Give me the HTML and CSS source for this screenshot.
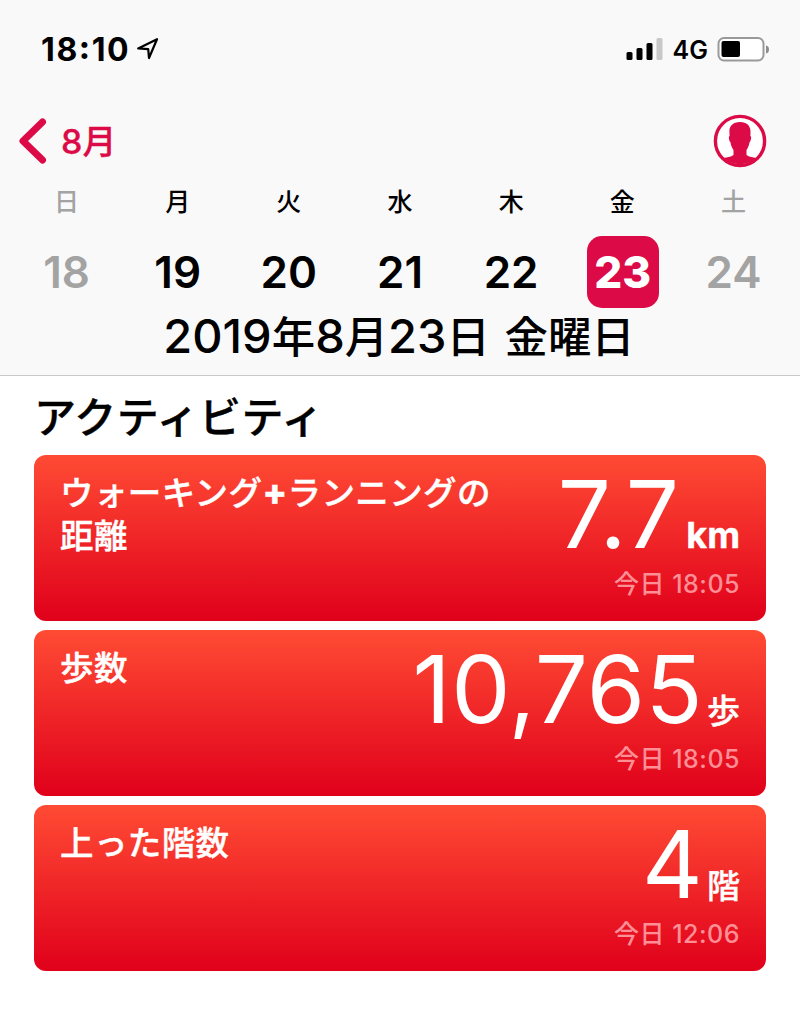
FILE: index.html
```
<!DOCTYPE html>
<html lang="ja">
<head>
    <meta charset="utf-8">
    <title>アクティビティ</title>
    <link rel="stylesheet" href="styles.css">
</head>
<body>
    <header class="header">
        <div class="status">
            <span class="time">18<span class="colon">:</span>10</span>
            <svg class="location" width="22" height="22" viewBox="0 0 22 22">
                <path d="M1.2 10.4 L20 1.2 L12 20 L11.2 11.2 Z" fill="none" stroke="#000" stroke-width="2.2" stroke-linejoin="round"/>
            </svg>
            <div class="status-right">
                <svg width="37" height="24" viewBox="0 0 37 24">
                    <rect x="0.5" y="15" width="6" height="8" rx="1.5"/>
                    <rect x="10.5" y="11" width="6" height="12" rx="1.5"/>
                    <rect x="20.5" y="6" width="6" height="17" rx="1.5"/>
                    <rect x="30.5" y="1" width="6" height="22" rx="1.5" fill="#c8c8c8"/>
                </svg>
                <span class="network">4G</span>
                <svg width="53" height="26" viewBox="0 0 53 26">
                    <rect x="1.5" y="2" width="45" height="22.5" rx="5.5" fill="#fff" stroke="#999" stroke-width="2"/>
                    <rect x="4.5" y="5" width="18.5" height="16" rx="2"/>
                    <path d="M49 9.5 Q52 10 52 13.5 Q52 17 49 17.5 Z" fill="#8c8c8c"/>
                </svg>
            </div>
        </div>
        <div class="nav">
            <a class="back">
                <svg width="28" height="46" viewBox="0 0 28 46">
                    <path d="M23.5 4 L4 23 L23.5 42" fill="none" stroke="#dc0a46" stroke-width="7" stroke-linecap="round" stroke-linejoin="round"/>
                </svg>
                <span>8月</span>
            </a>
            <svg class="profile" width="54" height="54" viewBox="0 0 54 54">
                <circle cx="27" cy="27" r="24.6" fill="#fff" stroke="#dc0a46" stroke-width="3.4"/>
                <path d="M27 8 C34 8 38 12 37.5 19 L37.4 22 C38.8 22.5 38 27 36.5 28.5 C36 32 34.5 34.5 33.5 36 L33.5 41 C36 43 40 43 43.5 44 A25 25 0 0 1 10.5 44 C14 43 18 43 20.5 41 L20.5 36 C19.5 34.5 18 32 17.5 28.5 C16 27 15.2 22.5 16.6 22 L16.4 17 C16.4 12 20 8 27 8 Z" fill="#dc0a46"/>
            </svg>
        </div>
        <div class="week">
            <div class="day off"><span class="name">日</span><span class="num">18</span></div>
            <div class="day"><span class="name">月</span><span class="num">19</span></div>
            <div class="day"><span class="name">火</span><span class="num">20</span></div>
            <div class="day"><span class="name">水</span><span class="num">21</span></div>
            <div class="day"><span class="name">木</span><span class="num">22</span></div>
            <div class="day selected"><span class="name">金</span><span class="num">23</span></div>
            <div class="day off"><span class="name">土</span><span class="num">24</span></div>
        </div>
        <div class="date"><b>2019</b>年<b>8</b>月<b>23</b>日 金曜日</div>
    </header>

    <main class="content">
        <h1>アクティビティ</h1>
        <div class="card">
            <div class="label">ウォーキング<span class="plus">+</span>ランニングの<br>距離</div>
            <div class="data">
                <div class="value">7.7<span class="unit latin">km</span></div>
                <div class="updated">今日 18:05</div>
            </div>
        </div>
        <div class="card">
            <div class="label">歩数</div>
            <div class="data">
                <div class="value">10,765<span class="unit">歩</span></div>
                <div class="updated">今日 18:05</div>
            </div>
        </div>
        <div class="card">
            <div class="label">上った階数</div>
            <div class="data">
                <div class="value">4<span class="unit">階</span></div>
                <div class="updated">今日 12:06</div>
            </div>
        </div>
    </main>
</body>
</html>
```

FILE: styles.css
```
* { box-sizing: border-box; }
body { margin: 0; background: #fff; color: #000; font-family: Inter, "Noto Sans CJK JP", sans-serif; }
svg { display: block; flex: none; }

.header { height: 376px; background: #f9f9f9; border-bottom: 1px solid #c8c8c8; }

.status { display: flex; align-items: center; height: 98px; padding: 0 30px 0 41px; }
.time { padding-top: 2px; font-size: 32px; font-weight: 700; line-height: 38px; letter-spacing: 1.6px; }
.colon { font-weight: 800; line-height: 1; vertical-align: 2px; }
.location { margin-left: 7px; }
.status-right { display: flex; align-items: center; margin-left: auto; }
.network { margin: 2px 9px 0 10px; font-size: 25px; font-weight: 600; }

.nav { display: flex; align-items: center; justify-content: space-between; height: 85px; padding: 0 33px 0 19px; }
.back { display: flex; align-items: center; gap: 14px; color: #dc0a46; font-size: 34px; font-weight: 500; line-height: 46px; -webkit-text-stroke: 0.3px #dc0a46; }
.back span { padding-top: 2px; }

.week { display: grid; grid-template-columns: repeat(7, 1fr); padding: 0 11px; }
.day { display: flex; flex-direction: column; align-items: center; }
.name { height: 53px; font-size: 25px; font-weight: 500; line-height: 38px; }
.num { width: 72px; height: 72px; border-radius: 15px; font-size: 44px; font-weight: 600; line-height: 72px; text-align: center; }
.off { color: #a3a3a3; }
.selected .num { margin-left: 1px; background: #dc0a46; color: #fff; font-weight: 800; }

.date { height: 56px; padding-right: 2px; font-size: 43.4px; font-weight: 500; line-height: 56px; text-align: center; white-space: nowrap; word-spacing: 3px; }
.date b { font-size: 47px; font-weight: 500; }

.content { padding: 0 34px; }
h1 { height: 79px; margin: 0; font-size: 42px; font-weight: 500; line-height: 83px; letter-spacing: 0.4px; -webkit-text-stroke: 0.4px #000; }

.card { display: flex; justify-content: space-between; height: 166px; margin-bottom: 9px; padding: 17px 26px 0; border-radius: 12px; background: linear-gradient(#ff4b34, #e0001b); color: #fff; }
.label { font-size: 33.5px; font-weight: 500; line-height: 43px; letter-spacing: 0.4px; white-space: nowrap; -webkit-text-stroke: 0.4px #fff; }
.plus { font-size: 36px; font-weight: 800; line-height: 1; }
.data { text-align: right; }
.value { height: 89px; font-size: 94px; letter-spacing: 0.4px; line-height: 84px; white-space: nowrap; }
.unit { margin-left: 4px; font-size: 33px; font-weight: 500; letter-spacing: 0; -webkit-text-stroke: 0.4px #fff; }
.latin { margin-left: 7px; font-size: 36px; font-weight: 700; }
.updated { color: #ff8f96; font-size: 25px; font-weight: 500; letter-spacing: 0.5px; line-height: 46px; }
```
